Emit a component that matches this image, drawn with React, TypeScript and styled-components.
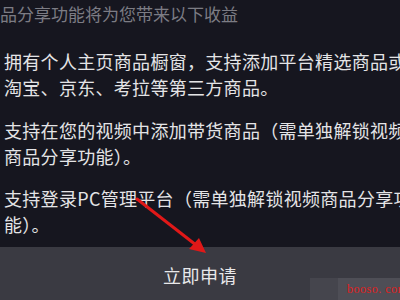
import styled, { createGlobalStyle } from "styled-components";

const GlobalStyle = createGlobalStyle`
  html, body {
    margin: 0;
    padding: 0;
    background: #16161f;
  }
  body {
    font-family: "Noto Sans CJK SC", "Noto Sans", sans-serif;
  }
`;

const Screen = styled.div`
  position: relative;
  width: 400px;
  height: 300px;
  overflow: hidden;
  display: flex;
  flex-direction: column;
  background: #16161f;
`;

const Content = styled.div`
  flex: 1;
  display: flex;
  flex-direction: column;
  padding: 1px 0 0 4px;
`;

const Title = styled.div`
  margin-left: -4px;
  font-size: 17px;
  line-height: 26px;
  color: #7c7c84;
  white-space: nowrap;
`;

const Paragraph = styled.div<{ $gap: number }>`
  margin-top: ${(p) => p.$gap}px;
  font-size: 18px;
  line-height: 26px;
  color: #e4e4e6;
  letter-spacing: 0.3px;
`;

const Line = styled.div`
  white-space: nowrap;
`;

const ApplyBar = styled.div`
  height: 53px;
  flex-shrink: 0;
  display: flex;
  align-items: center;
  justify-content: center;
  padding-top: 2px;
  box-sizing: border-box;
  background: #3a3a42;
  color: #e8e8ea;
  font-size: 18px;
  letter-spacing: 0.5px;
`;

const Arrow = styled.svg`
  position: absolute;
  left: 0;
  top: 0;
  pointer-events: none;
`;

const Watermark = styled.div`
  position: absolute;
  right: 0;
  bottom: 0;
  width: 90px;
  height: 22px;
  display: flex;
`;

const WaterPatch = styled.div<{ $w: number; $c: string }>`
  width: ${(p) => p.$w}px;
  background: ${(p) => p.$c};
`;

const WaterText = styled.span`
  position: absolute;
  left: 37px;
  top: 4px;
  font-family: "Liberation Serif", serif;
  font-size: 12px;
  color: #e02020;
  letter-spacing: 0.5px;
  white-space: nowrap;
`;

const paragraphs = [
  {
    gap: 21,
    lines: ["拥有个人主页商品橱窗，支持添加平台精选商品或", "淘宝、京东、考拉等第三方商品。"],
  },
  {
    gap: 17,
    lines: ["支持在您的视频中添加带货商品（需单独解锁视频", "商品分享功能）。"],
  },
  {
    gap: 16,
    lines: ["支持登录PC管理平台（需单独解锁视频商品分享功", "能）。"],
  },
];

export default function App() {
  return (
    <>
      <GlobalStyle />
      <Screen>
        <Content>
          <Title>品分享功能将为您带来以下收益</Title>
          {paragraphs.map((p, i) => (
            <Paragraph key={i} $gap={p.gap}>
              {p.lines.map((l) => (
                <Line key={l}>{l}</Line>
              ))}
            </Paragraph>
          ))}
        </Content>
        <ApplyBar>立即申请</ApplyBar>
        <Arrow width="400" height="300" viewBox="0 0 400 300">
          <line x1="137" y1="199" x2="196" y2="245" stroke="#e01818" strokeWidth="3" strokeLinecap="round" />
          <polygon points="206,253 189,249 199,238" fill="#e01818" />
        </Arrow>
        <Watermark>
          <WaterPatch $w={28} $c="#45454d" />
          <WaterPatch $w={62} $c="#4e4e56" />
          <WaterText>booso. com</WaterText>
        </Watermark>
      </Screen>
    </>
  );
}
